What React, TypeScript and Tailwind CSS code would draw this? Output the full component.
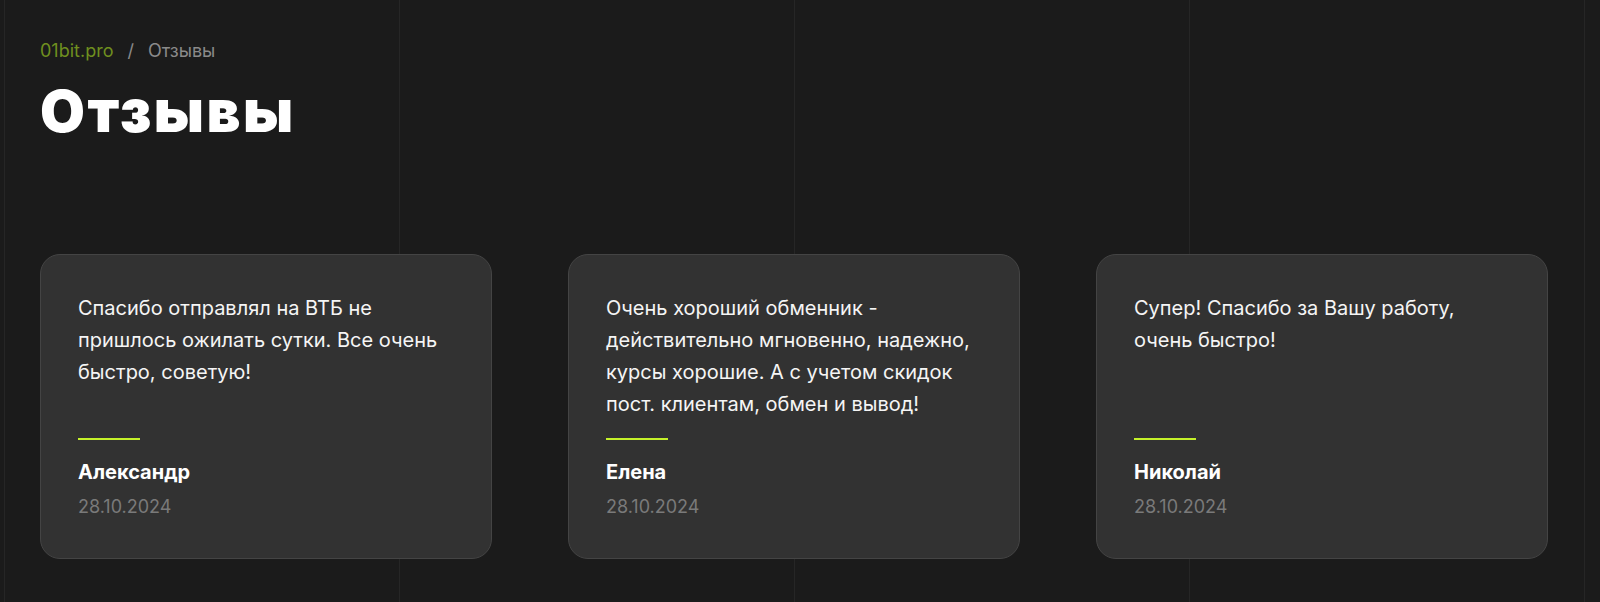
import React from "react";

const reviews = [
  {
    text: "Спасибо отправлял на ВТБ не пришлось ожилать сутки. Все очень быстро, советую!",
    name: "Александр",
    date: "28.10.2024",
  },
  {
    text: "Очень хороший обменник - действительно мгновенно, надежно, курсы хорошие. А с учетом скидок пост. клиентам, обмен и вывод!",
    name: "Елена",
    date: "28.10.2024",
  },
  {
    text: "Супер! Спасибо за Вашу работу, очень быстро!",
    name: "Николай",
    date: "28.10.2024",
  },
];

export default function App() {
  return (
    <div
      className="relative min-h-[602px] w-full overflow-hidden bg-[#1b1b1b]"
      style={{ fontFamily: "Inter, 'Noto Sans', sans-serif" }}
    >
      <div className="pointer-events-none absolute inset-0 flex pl-[4px]">
        <div className="h-full w-[395px] border-l border-[#262626]" />
        <div className="h-full w-[395px] border-l border-[#262626]" />
        <div className="h-full w-[395px] border-l border-[#262626]" />
        <div className="h-full w-[395px] border-l border-[#262626]" />
        <div className="h-full w-[10px] border-l border-[#262626]" />
      </div>

      <div className="relative pl-[40px] pt-[38px]">
        <div className="flex items-center gap-[14px] text-[18px] leading-[26px]">
          <span className="text-[#6f8f1f]">01bit.pro</span>
          <span className="text-[#8a8a8a]">/</span>
          <span className="text-[#8a8a8a]">Отзывы</span>
        </div>
        <h1 className="mt-[15px] text-[58px] font-black leading-[64px] tracking-[2.5px] text-white">
          Отзывы
        </h1>

        <div className="mt-[111px] flex w-[1509px] gap-[76px]">
          {reviews.map((r) => (
            <div
              key={r.name}
              className="flex h-[305px] w-[452px] flex-col rounded-[20px] border border-[#444444] bg-[#323232] px-[37px] pb-[38px] pt-[37px]"
            >
              <p className="max-w-[364px] text-[20px] leading-[32px] text-[#f5f5f5]">{r.text}</p>
              <div className="mt-auto h-[2px] w-[62px] bg-[#c5f12a]" />
              <div className="mt-[19px] text-[20px] font-bold leading-[26px] text-white">
                {r.name}
              </div>
              <div className="mt-[9px] text-[18px] leading-[26px] text-[#7a7a7a]">{r.date}</div>
            </div>
          ))}
        </div>
      </div>
    </div>
  );
}
